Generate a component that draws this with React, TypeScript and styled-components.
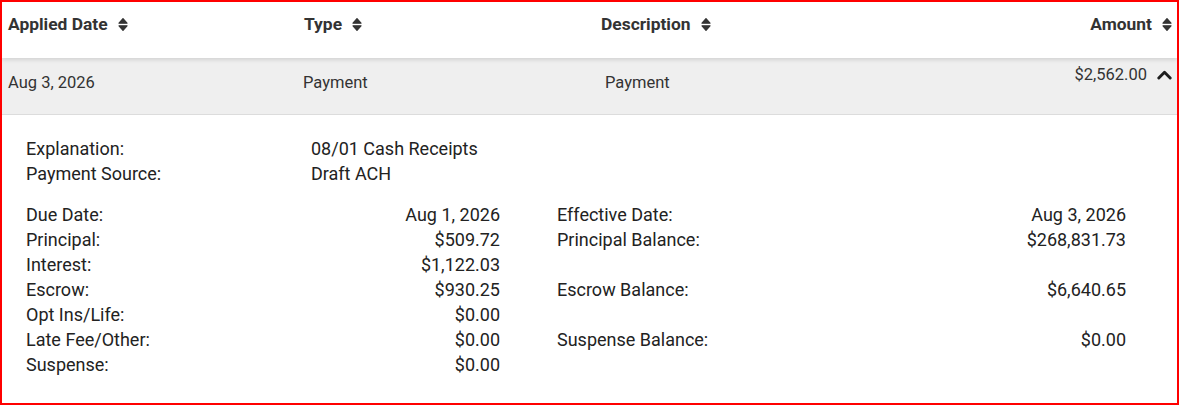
import styled, { createGlobalStyle } from 'styled-components'

const GlobalStyle = createGlobalStyle`
  body {
    margin: 0;
    font-family: Roboto, "Liberation Sans", Arial, sans-serif;
    color: #212529;
    background: #fff;
  }
`

type Detail = { label: string; value: string }

const leftDetails: Detail[] = [
  { label: 'Due Date:', value: 'Aug 1, 2026' },
  { label: 'Principal:', value: '$509.72' },
  { label: 'Interest:', value: '$1,122.03' },
  { label: 'Escrow:', value: '$930.25' },
  { label: 'Opt Ins/Life:', value: '$0.00' },
  { label: 'Late Fee/Other:', value: '$0.00' },
  { label: 'Suspense:', value: '$0.00' },
]

const rightDetails: (Detail | null)[] = [
  { label: 'Effective Date:', value: 'Aug 3, 2026' },
  { label: 'Principal Balance:', value: '$268,831.73' },
  null,
  { label: 'Escrow Balance:', value: '$6,640.65' },
  null,
  { label: 'Suspense Balance:', value: '$0.00' },
]

const Frame = styled.div`
  box-sizing: border-box;
  width: 1179px;
  height: 405px;
  border: 2px solid #ff0000;
  overflow: hidden;
  background: #fff;
`

const HeaderRow = styled.div`
  display: grid;
  grid-template-columns: 296px 297px 1fr 300px;
  height: 56px;
  align-items: center;
  position: relative;
  z-index: 1;
  box-shadow: 0 2px 4px rgba(0, 0, 0, 0.12);
  background: #fff;
`

const HeaderCell = styled.div<{ $right?: boolean }>`
  display: flex;
  align-items: center;
  justify-content: ${(p) => (p.$right ? 'flex-end' : 'flex-start')};
  gap: 10px;
  padding: 0 ${(p) => (p.$right ? '5px' : '6px')};
  margin-top: -12px;
  font-size: 17.4px;
  font-weight: 700;
  color: #333;
`

const DataRow = styled.div`
  display: grid;
  grid-template-columns: 296px 297px 1fr 300px;
  height: 56px;
  background: #efefef;
  border-bottom: 1px solid #dcdcdc;
`

const DataCell = styled.div<{ $right?: boolean; $top?: number; $indent?: number }>`
  display: flex;
  align-items: center;
  justify-content: ${(p) => (p.$right ? 'flex-end' : 'flex-start')};
  gap: 10px;
  height: 20px;
  margin-top: ${(p) => p.$top ?? 14}px;
  padding-left: ${(p) => p.$indent ?? 6}px;
  padding-right: ${(p) => (p.$right ? '5px' : '0')};
  font-size: 16.5px;
  color: #333;
`

const Details = styled.div`
  padding: 21px 0 0 24px;
  font-size: 18px;
  color: #222;
`

const InfoGrid = styled.div`
  display: grid;
  grid-template-columns: 285px auto;
  line-height: 25px;
  margin-bottom: 16px;
`

const Columns = styled.div`
  display: grid;
  grid-template-columns: 474px 569px;
  column-gap: 57px;
  line-height: 25px;
`

const Pair = styled.div`
  display: flex;
  justify-content: space-between;
  height: 25px;
`

const SortIcon = () => (
  <svg width="10" height="15" viewBox="0 0 10 15">
    <path d="M1 6.2 L5 1.6 L9 6.2 Z" fill="#333" stroke="#333" strokeWidth="1.2" strokeLinejoin="round" />
    <path d="M1 8.8 L5 13.4 L9 8.8 Z" fill="#333" stroke="#333" strokeWidth="1.2" strokeLinejoin="round" />
  </svg>
)

const ChevronUp = () => (
  <svg width="15" height="11" viewBox="0 0 15 11">
    <path d="M1.8 9 L7.5 3.2 L13.2 9" fill="none" stroke="#1e1e1e" strokeWidth="2.9" strokeLinecap="round" strokeLinejoin="round" />
  </svg>
)

function App() {
  return (
    <>
      <GlobalStyle />
      <Frame>
        <HeaderRow>
          <HeaderCell>
            Applied Date <SortIcon />
          </HeaderCell>
          <HeaderCell>
            Type <SortIcon />
          </HeaderCell>
          <HeaderCell>
            Description <SortIcon />
          </HeaderCell>
          <HeaderCell $right>
            Amount <SortIcon />
          </HeaderCell>
        </HeaderRow>

        <DataRow>
          <DataCell>Aug 3, 2026</DataCell>
          <DataCell $indent={5}>Payment</DataCell>
          <DataCell $indent={10}>Payment</DataCell>
          <DataCell $right $top={6}>
            $2,562.00 <ChevronUp />
          </DataCell>
        </DataRow>

        <Details>
          <InfoGrid>
            <span>Explanation:</span>
            <span>08/01 Cash Receipts</span>
            <span>Payment Source:</span>
            <span>Draft ACH</span>
          </InfoGrid>
          <Columns>
            <div>
              {leftDetails.map((d) => (
                <Pair key={d.label}>
                  <span>{d.label}</span>
                  <span>{d.value}</span>
                </Pair>
              ))}
            </div>
            <div>
              {rightDetails.map((d, i) =>
                d ? (
                  <Pair key={d.label}>
                    <span>{d.label}</span>
                    <span>{d.value}</span>
                  </Pair>
                ) : (
                  <Pair key={`empty-${i}`} />
                ),
              )}
            </div>
          </Columns>
        </Details>
      </Frame>
    </>
  )
}

export default App
